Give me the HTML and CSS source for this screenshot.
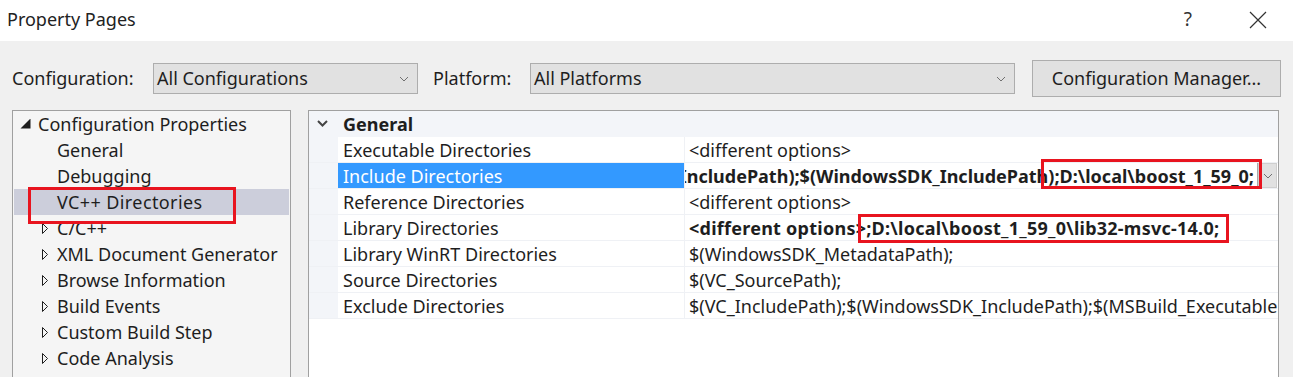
FILE: index.html
```html
<!DOCTYPE html>
<html lang="en">
<head>
  <meta charset="utf-8">
  <title>Property Pages</title>
  <link rel="stylesheet" href="styles.css">
</head>
<body>
  <div class="titlebar">
    <span class="title">Property Pages</span>
    <span class="help">?</span>
    <svg class="close" width="18" height="18" viewBox="0 0 18 18"><path d="M1 1L17 17M17 1L1 17"/></svg>
  </div>

  <div class="toolbar">
    <span class="lbl lbl-config">Configuration:</span>
    <div class="combo combo-config">
      <span>All Configurations</span>
      <svg class="chev" width="10" height="6" viewBox="0 0 10 6"><path d="M1 1L5 5L9 1"/></svg>
    </div>
    <span class="lbl lbl-plat">Platform:</span>
    <div class="combo combo-plat">
      <span>All Platforms</span>
      <svg class="chev" width="10" height="6" viewBox="0 0 10 6"><path d="M1 1L5 5L9 1"/></svg>
    </div>
    <div class="btn">Configuration Manager...</div>
  </div>

  <div class="main">
    <div class="tree">
      <div class="node lv0">
        <svg class="twisty" width="18" height="10" viewBox="0 0 18 10"><path d="M0.5 9.5L10.5 -0.5L10.5 9.5Z"/></svg>
        <span>Configuration Properties</span>
      </div>
      <div class="node leaf">General</div>
      <div class="node leaf">Debugging</div>
      <div class="node leaf sel">VC++ Directories</div>
      <div class="node lv1"><svg class="twisty" width="15" height="11" viewBox="0 0 15 11"><path d="M0.5 0.5L5.5 5.5L0.5 10.5Z"/></svg><span>C/C++</span></div>
      <div class="node lv1"><svg class="twisty" width="15" height="11" viewBox="0 0 15 11"><path d="M0.5 0.5L5.5 5.5L0.5 10.5Z"/></svg><span>XML Document Generator</span></div>
      <div class="node lv1"><svg class="twisty" width="15" height="11" viewBox="0 0 15 11"><path d="M0.5 0.5L5.5 5.5L0.5 10.5Z"/></svg><span>Browse Information</span></div>
      <div class="node lv1"><svg class="twisty" width="15" height="11" viewBox="0 0 15 11"><path d="M0.5 0.5L5.5 5.5L0.5 10.5Z"/></svg><span>Build Events</span></div>
      <div class="node lv1"><svg class="twisty" width="15" height="11" viewBox="0 0 15 11"><path d="M0.5 0.5L5.5 5.5L0.5 10.5Z"/></svg><span>Custom Build Step</span></div>
      <div class="node lv1"><svg class="twisty" width="15" height="11" viewBox="0 0 15 11"><path d="M0.5 0.5L5.5 5.5L0.5 10.5Z"/></svg><span>Code Analysis</span></div>
    </div>

    <div class="grid">
      <div class="cat">
        <svg class="cat-chev" width="29" height="10" viewBox="0 0 29 10"><path d="M9 2L13.5 6.5L18 2"/></svg>
        <span>General</span>
      </div>
      <div class="row">
        <div class="gut"></div>
        <div class="name">Executable Directories</div>
        <div class="val">&lt;different options&gt;</div>
      </div>
      <div class="row active">
        <div class="gut"></div>
        <div class="name">Include Directories</div>
        <div class="val">
          <div class="edit"><span>$(VC_IncludePath);$(WindowsSDK_IncludePath)<span class="hl hl-inc">;D:\local\boost_1_59_0;</span></span></div>
          <div class="drop"><svg width="10" height="6" viewBox="0 0 10 6"><path d="M1 1L5 5L9 1"/></svg></div>
        </div>
      </div>
      <div class="row">
        <div class="gut"></div>
        <div class="name">Reference Directories</div>
        <div class="val">&lt;different options&gt;</div>
      </div>
      <div class="row">
        <div class="gut"></div>
        <div class="name">Library Directories</div>
        <div class="val bold">&lt;different options&gt;<span class="hl hl-lib">;D:\local\boost_1_59_0\lib32-msvc-14.0;</span></div>
      </div>
      <div class="row">
        <div class="gut"></div>
        <div class="name">Library WinRT Directories</div>
        <div class="val">$(WindowsSDK_MetadataPath);</div>
      </div>
      <div class="row">
        <div class="gut"></div>
        <div class="name">Source Directories</div>
        <div class="val">$(VC_SourcePath);</div>
      </div>
      <div class="row">
        <div class="gut"></div>
        <div class="name">Exclude Directories</div>
        <div class="val">$(VC_IncludePath);$(WindowsSDK_IncludePath);$(MSBuild_ExecutablePath);$(VC_LibraryPath_x86);</div>
      </div>
    </div>
  </div>
</body>
</html>
```

FILE: styles.css
```css
* {padding: 0; margin: 0; box-sizing: border-box}
body {
  width: 1293px;
  height: 377px;
  overflow: hidden;
  background: #f0f0f0;
  font-family: "Noto Sans", "Open Sans", sans-serif;
  font-size: 18px;
  color: #1e1e1e;
}

/* title bar */
.titlebar {
  height: 41px;
  background: #fff;
  display: flex;
  align-items: center;
  padding-left: 7px;
}
.title {
  flex: 1;
  color: #222;
  margin-top: -4px;
}
.help {
  color: #333;
  font-size: 19px;
  margin-right: 57px;
  margin-top: -3px;
}
.close {
  margin-right: 26px;
  margin-top: -2px;
}
.close path {
  stroke: #333;
  stroke-width: 1.2;
  fill: none;
}

/* configuration bar */
.toolbar {
  display: flex;
  align-items: center;
  padding: 19px 0 13px 12px;
}
.lbl {margin-top: -1px;}
.lbl-config {width: 141px;}
.lbl-plat {width: 97px; margin-left: 15px;}
.combo {
  height: 31px;
  background: #e1e1e1;
  border: 1px solid #adadad;
  display: flex;
  align-items: center;
  justify-content: space-between;
  padding: 0 8px 0 3px;
}
.combo span {margin-top: -1px;}
.combo-config {width: 265px;}
.combo-plat {width: 485px;}
.chev path, .drop path {
  stroke: #707070;
  stroke-width: 1;
  fill: none;
}
.btn {
  width: 249px;
  height: 37px;
  margin-left: 17px;
  background: #e1e1e1;
  border: 1px solid #adadad;
  display: flex;
  align-items: center;
  justify-content: center;
  padding-bottom: 1px;
}

/* left tree */
.main {
  display: flex;
  gap: 17px;
  padding-left: 12px;
}
.tree {
  width: 279px;
  height: 290px;
  background: #f5f5f5;
  border: 1px solid #a0a0a0;
}
.node {
  height: 26px;
  display: flex;
  align-items: center;
  white-space: nowrap;
}
.lv0 {padding-left: 7px;}
.lv1 {padding-left: 29px;}
.leaf {padding-left: 44px;}
.twisty {flex: none;}
.lv0 .twisty path {fill: #1e1e1e;}
.lv1 .twisty path {
  fill: none;
  stroke: #1e1e1e;
  stroke-width: 1;
}
.sel {
  position: relative;
  background: #cccedb;
  margin: 0 1px;
  padding-left: 43px;
  letter-spacing: 0.4px;
}
.sel::after {
  content: '';
  position: absolute;
  left: 14px;
  top: -2px;
  width: 202px;
  height: 31px;
  border: 3px solid #e8141f;
}

/* property grid */
.grid {
  width: 971px;
  height: 290px;
  background: #fff;
  border: 1px solid #a0a0a0;
}
.cat {
  height: 26px;
  background: #f3f5f9;
  display: flex;
  align-items: center;
  font-weight: bold;
}
.cat-chev {margin-right: 5px;}
.cat-chev path {
  stroke: #444;
  stroke-width: 2;
  fill: none;
}
.row {
  height: 26px;
  display: flex;
  border-bottom: 1px solid #eff1f5;
}
.gut {
  width: 29px;
  background: #f3f5f9;
  flex: none;
}
.name {
  width: 347px;
  flex: none;
  padding-left: 5px;
  line-height: 26px;
  border-right: 1px solid #eff1f5;
  white-space: nowrap;
}
.val {
  flex: 1;
  min-width: 0;
  padding-left: 4px;
  line-height: 26px;
  white-space: nowrap;
  overflow-x: clip;
  overflow-y: visible;
}
.bold {font-weight: bold; letter-spacing: 0.25px;}
.active .name {
  background: #3399ff;
  color: #fff;
}
.active .val {
  display: flex;
  padding-left: 2px;
  padding-right: 1px;
  font-weight: bold;
}
.edit {
  flex: 1;
  min-width: 0;
  display: flex;
  justify-content: flex-end;
  padding-right: 3px;
  border-right: 1px solid #a8a8a8;
}
.drop {
  width: 19px;
  flex: none;
  background: #e1e1e1;
  border: 1px solid #cfcfcf;
  display: flex;
  align-items: center;
  justify-content: center;
}

/* red annotation boxes */
.hl {position: relative;}
.hl::after {
  content: '';
  position: absolute;
  border: 3px solid #e8141f;
}
.hl-inc::after {left: -13px; right: -8px; top: -5px; bottom: -1px;}
.hl-lib::after {left: -8px; right: -10px; top: -2px; bottom: -3px;}
```
